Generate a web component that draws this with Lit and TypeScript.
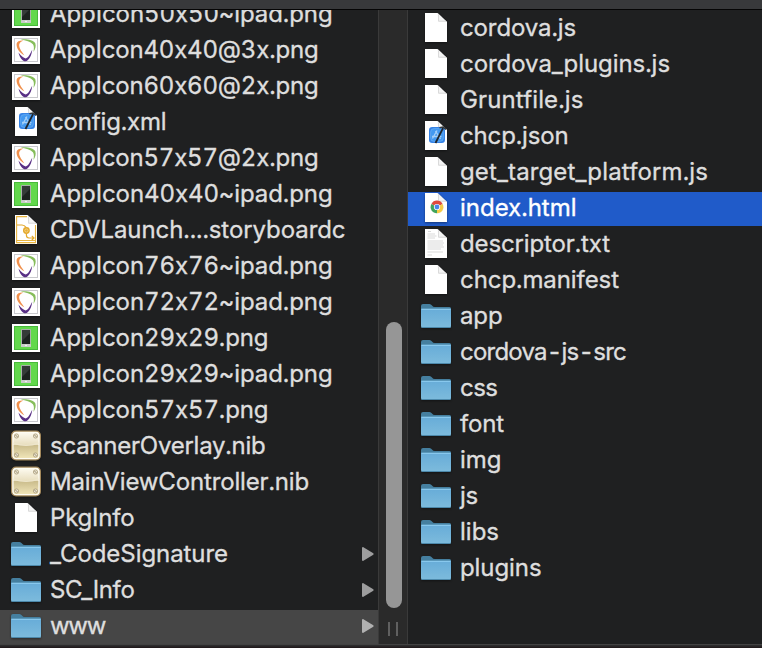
import { LitElement, html, css, svg, nothing } from "lit";
import { customElement, property } from "lit/decorators.js";

type Kind = "phone" | "logo" | "xcode" | "story" | "nib" | "doc" | "folder" | "chrome" | "text";
interface Entry { name: string; kind: Kind; right: number; selected?: boolean }

const left: Entry[] = [
  { name: "AppIcon50x50~ipad.png", kind: "phone", right: 332 },
  { name: "AppIcon40x40@3x.png", kind: "logo", right: 318 },
  { name: "AppIcon60x60@2x.png", kind: "logo", right: 318 },
  { name: "config.xml", kind: "xcode", right: 166 },
  { name: "AppIcon57x57@2x.png", kind: "logo", right: 318 },
  { name: "AppIcon40x40~ipad.png", kind: "phone", right: 332 },
  { name: "CDVLaunch....storyboardc", kind: "story", right: 345 },
  { name: "AppIcon76x76~ipad.png", kind: "logo", right: 332 },
  { name: "AppIcon72x72~ipad.png", kind: "logo", right: 332 },
  { name: "AppIcon29x29.png", kind: "phone", right: 268 },
  { name: "AppIcon29x29~ipad.png", kind: "phone", right: 332 },
  { name: "AppIcon57x57.png", kind: "logo", right: 268 },
  { name: "scannerOverlay.nib", kind: "nib", right: 265 },
  { name: "MainViewController.nib", kind: "nib", right: 308.5 },
  { name: "PkgInfo", kind: "doc", right: 134 },
  { name: "_CodeSignature", kind: "folder", right: 227.5 },
  { name: "SC_Info", kind: "folder", right: 134 },
  { name: "www", kind: "folder", right: 104.5, selected: true },
];

const right: Entry[] = [
  { name: "cordova.js", kind: "doc", right: 575.5 },
  { name: "cordova_plugins.js", kind: "doc", right: 669.5 },
  { name: "Gruntfile.js", kind: "doc", right: 583 },
  { name: "chcp.json", kind: "xcode", right: 568 },
  { name: "get_target_platform.js", kind: "doc", right: 707.5 },
  { name: "index.html", kind: "chrome", right: 576, selected: true },
  { name: "descriptor.txt", kind: "text", right: 609.5 },
  { name: "chcp.manifest", kind: "doc", right: 618.5 },
  { name: "app", kind: "folder", right: 502 },
  { name: "cordova-js-src", kind: "folder", right: 625.5 },
  { name: "css", kind: "folder", right: 497 },
  { name: "font", kind: "folder", right: 503.5 },
  { name: "img", kind: "folder", right: 501 },
  { name: "js", kind: "folder", right: 477.5 },
  { name: "libs", kind: "folder", right: 498.5 },
  { name: "plugins", kind: "folder", right: 541 },
];

const page = svg`
  <path d="M4 2H16.5L26 11V31H4Z" fill="#fff"/>
  <path d="M16.5 2L26 11H17.5Z" fill="#f4f4f4"/>
  <path d="M17.5 3.2V10.2H25" fill="none" stroke="#d3d3d3" stroke-width=".8"/>`;

const card = svg`<rect x="1" y="3" width="28" height="28" fill="#fff"/>`;

const screw = (x: number, y: number) => svg`
  <circle cx=${x} cy=${y} r="2.1" fill="#eee7d3" stroke="#a89b78" stroke-width=".8"/>
  <path d=${`M${x - 1.2} ${y - 1.2}l2.4 2.4`} stroke="#81775c" stroke-width=".8"/>`;

const art: Record<Kind, unknown> = {
  doc: page,
  logo: svg`${card}
    <rect x="3.5" y="5.5" width="23" height="23" fill="#fff" stroke="#c9c9cd"/>
    <path d="M12.5 7.6Q6.6 7.2 5.6 10.8C5.2 15 8.5 20 13.3 22.3C10 18 7.8 14.4 8.2 11.6C8.6 9.6 10.3 8.3 12.5 7.6Z" fill="#f0904c"/>
    <path d="M9.5 6.6C15 5.6 22.2 7 24.3 10.2C25.3 13 24.2 16.5 22.4 19C23.1 15.5 23.2 13 21.9 11.2C19.6 8.6 15 7.4 9.5 6.6Z" fill="#86bd5b"/>
    <path d="M7.5 19.5C8.8 25 11.8 28.3 14.5 28.3C18 28.1 20.9 21.5 21.2 16.8C19.2 21 17 25.2 14.8 25.4C12.5 25.2 9.8 22.8 7.5 19.5Z" fill="#593085"/>`,
  phone: svg`${card}
    <rect x="3.5" y="5.5" width="23" height="23" fill="#62d84c" stroke="#48b83b"/>
    <rect x="10" y="8" width="10" height="18" rx=".8" fill="#a9b0a9"/>
    <rect x="10" y="23" width="10" height="3" rx=".6" fill="#c9cdc9"/>
    <rect x="11" y="9" width="8" height="14" fill="#1c2220"/>
    <path d="M11 9H19V12L11 20Z" fill="#343b38"/>
    <circle cx="15" cy="24.5" r=".8" fill="#fff"/>`,
  xcode: svg`${page}
    <rect x="8" y="8" width="16" height="16" rx="3.2" fill="#3583e6"/>
    <rect x="9.6" y="9.6" width="12.8" height="12.8" rx="3.5" fill="#4399f0" stroke="#72b3f5" stroke-width=".6"/>
    <path d="M16 11.5L11.5 19.5M14.5 12L19.5 20M11 17.5H20.5" stroke="#a5d0f8" stroke-width="1.3"/>
    <path d="M22 9.2L14.5 24" stroke="#20262c" stroke-width="1.8"/>
    <path d="M18.5 8.7L22 8L25.3 10.4" fill="none" stroke="#33383b" stroke-width="1.6"/>`,
  story: svg`${page}
    <path d="M16 3.6H5.6V29.6H24.5V12M5 27.5H25" fill="none" stroke="#e8b542" stroke-width="1.1"/>
    <path d="M6 12H11Q13.5 12 15 14.3M15.4 20.5V22Q15.4 25 18 25H23M20.8 22.8L23 25L20.8 27" fill="none" stroke="#e3a82c" stroke-width="1.2"/>
    <circle cx="15.4" cy="17.5" r="2.7" fill="#e8ae34" stroke="#e3a82c" stroke-width="1.4"/>
    <circle cx="15.4" cy="17.5" r="1.6" fill="none" stroke="#f9e2ac" stroke-width=".6"/>`,
  nib: svg`
    <defs><linearGradient id="nib" x2="0" y2="1"><stop stop-color="#fcf9ed"/><stop offset=".46" stop-color="#e9dfc0"/><stop offset=".5" stop-color="#cbbd8d"/><stop offset="1" stop-color="#efe4b7"/></linearGradient></defs>
    <g transform="translate(0 1)">
      <rect x=".6" y="1.1" width="28.8" height="28.8" rx="4.4" fill="#fffdf3" stroke="#a4895c" stroke-width="1.2"/>
      <rect x="2.6" y="3.1" width="24.8" height="24.8" rx="2" fill="url(#nib)"/>
      <path d="M2.6 12.5Q15 17.4 27.4 12.5V14Q15 18 2.6 14Z" fill="#eee6cc"/>
      ${screw(5.5, 6)}${screw(24.5, 6)}${screw(5.5, 25)}${screw(24.5, 25)}
    </g>`,
  folder: svg`
    <defs><linearGradient id="folder" x2="0" y2="1"><stop stop-color="#67acd8"/><stop offset="1" stop-color="#7dbbdc"/></linearGradient></defs>
    <path d="M0 7Q0 5 2 5H8.5Q10 5 11 6.5Q12 8 14 8H28.5Q30 8 30 9.5V13H0Z" fill="#457f9f"/>
    <path d="M0 9.8H30V27Q30 29 28.5 29H1.5Q0 29 0 27Z" fill="url(#folder)"/>
    <path d="M.5 10.3H29.5" stroke="#95d2f6" stroke-width=".9"/>
    <path d="M.7 28.5H29.3" stroke="#4c88aa"/>`,
  chrome: svg`${page}
    <circle cx="16" cy="16" r="6.8" fill="#f4f4f4"/>
    <path d="M16 16L10.4 13A6.3 6.3 0 0 1 21.6 13Z" fill="#df4a3d"/>
    <path d="M16 16L10.4 13A6.3 6.3 0 0 0 16 22.3Z" fill="#3fa45b"/>
    <path d="M16 16L21.6 13A6.3 6.3 0 0 1 16 22.3Z" fill="#f7cb46"/>
    <circle cx="16" cy="16" r="3.1" fill="#fff"/><circle cx="16" cy="16" r="2.4" fill="#4a86e8"/>`,
  text: svg`${page}
    <path d="M7 4.5H10M6.5 7H14M6.5 9H15.5M6.5 11H14M6.5 14H22M6.5 16H23M6.5 18H22M6.5 20H23M6.5 22H20M6.5 25H22M6.5 28H11" stroke="#cfcfcf" stroke-width=".8"/>`,
};

@customElement("file-row")
class FileRow extends LitElement {
  @property({ attribute: false }) entry!: Entry;
  @property({ type: Number }) start = 0;
  @property({ type: Boolean }) arrow = false;

  static styles = css`
    :host { display: flow-root; height: 36px; flex: none; }
    .row { height: 34px; margin-top: 1px; display: flex; align-items: center; padding-left: var(--inset); }
    .icon { width: 30px; height: 32px; flex: none; filter: drop-shadow(0 1px 1px #0006); margin-top: -4px; }
    .name { margin-left: 9px; white-space: pre; font: 24px/32px Inter, sans-serif; font-variant-ligatures: none; font-variant-numeric: tabular-nums; color: #dedede; -webkit-text-stroke: .35px #dedede; margin-top: -2px; }
    .arrow { width: 12px; height: 14px; margin-left: auto; margin-right: 4px; fill: #9d9d9e; margin-top: -2px; }
    .grey { background: #464646; }
    .grey .arrow { fill: #b1b1b1; }
    .blue { background: #205bc9; }
    .blue .name { color: #fff; -webkit-text-stroke-color: #fff; }
  `;

  firstUpdated() {
    const label = this.renderRoot.querySelector<HTMLElement>(".name")!;
    const width = label.getBoundingClientRect().width;
    const goal = this.entry.right - this.start + 0.5;
    label.style.letterSpacing = `${(goal - width) / this.entry.name.length}px`;
  }

  render() {
    const e = this.entry;
    const tint = e.selected ? (this.arrow ? "grey" : "blue") : "";
    return html`<div class="row ${tint}">
      <svg class="icon" viewBox="0 0 30 32">${art[e.kind]}</svg>
      <span class="name">${e.name}</span>
      ${this.arrow && e.kind === "folder"
        ? html`<svg class="arrow" viewBox="0 0 12 14"><path d="M1 0Q0 0 0 1V13Q0 14 1 14L11.3 7.8Q12 7 11.3 6.2Z"/></svg>`
        : nothing}
    </div>`;
  }
}

@customElement("app-root")
class AppRoot extends LitElement {
  static styles = css`
    :host { display: flex; flex-direction: column; width: 762px; height: 648px; overflow: hidden; background: #1f2021; }
    .top { flex: none; height: 10px; box-sizing: border-box; background: #38393b; border-bottom: 1px solid #050505; }
    .main { flex: 1; min-height: 0; display: flex; }
    .pane { display: flex; flex-direction: column; overflow: hidden; }
    .left { width: 378px; --inset: 11px; }
    .left .list { margin-top: -13px; }
    .right { flex: 1; --inset: 13px; }
    .right .list { margin-top: 1px; }
    .track { width: 28px; border-left: 1px solid #3a3a3a; border-right: 1px solid #3a3a3a; background: #2a2a2a; display: flex; flex-direction: column; align-items: center; }
    .thumb { width: 16px; height: 286px; margin: 312px 0 0 2px; border-radius: 8px; background: #969696; }
    .grip { width: 6px; height: 14px; border: solid #606060; border-width: 0 2px; margin-top: 14px; }
    .bottom { flex: none; height: 4px; box-sizing: border-box; border-top: 1px solid #424242; background: linear-gradient(#303031, #1e1719); }
  `;

  render() {
    return html`
      <div class="top"></div>
      <div class="main">
        <div class="pane left"><div class="list">${left.map((e) => html`<file-row .entry=${e} .start=${50} .arrow=${true}></file-row>`)}</div></div>
        <div class="track"><div class="thumb"></div><div class="grip"></div></div>
        <div class="pane right"><div class="list">${right.map((e) => html`<file-row .entry=${e} .start=${460}></file-row>`)}</div></div>
      </div>
      <div class="bottom"></div>`;
  }
}
